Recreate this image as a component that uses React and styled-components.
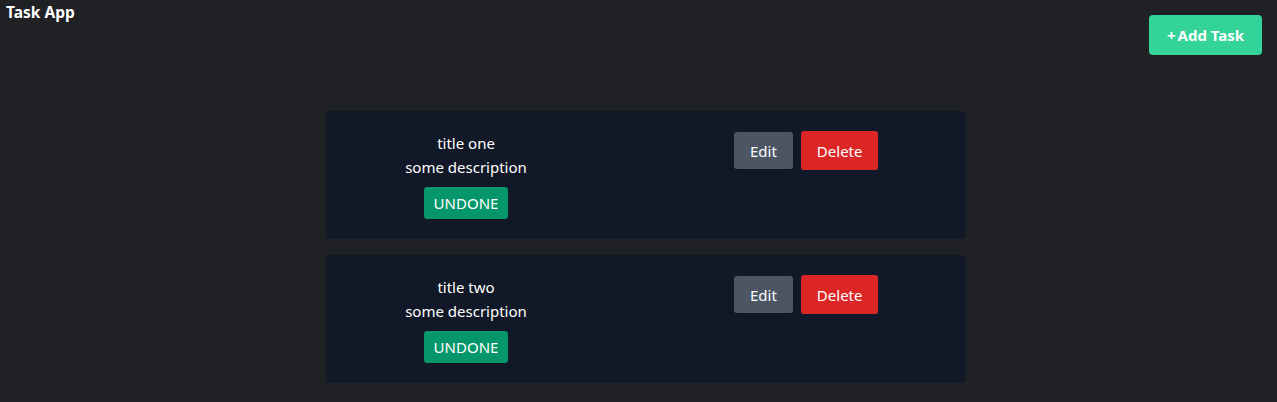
import React from 'react';
import styled, { createGlobalStyle } from 'styled-components';

const GlobalStyle = createGlobalStyle`
  body {
    margin: 0;
    background-color: #202124;
    font-family: "Noto Sans", "Open Sans", sans-serif;
    color: #ffffff;
  }
`;

const Page = styled.div`
  min-height: 100vh;
`;

const Header = styled.header`
  display: flex;
  justify-content: space-between;
  align-items: flex-start;
  padding: 0 15px 0 6px;
`;

const Title = styled.h1`
  margin: 2px 0 0;
  font-size: 15.5px;
  font-weight: 700;
  line-height: 20px;
`;

const AddButton = styled.button`
  margin-top: 15px;
  height: 40px;
  width: 113px;
  border: none;
  border-radius: 4px;
  background-color: #34d399;
  color: #ffffff;
  font-family: inherit;
  font-size: 15px;
  font-weight: 700;
  display: flex;
  align-items: center;
  justify-content: center;
  gap: 2px;
`;

const List = styled.div`
  display: flex;
  flex-direction: column;
  align-items: center;
  gap: 16px;
  padding: 56px 0 20px 15px;
`;

const Card = styled.div`
  width: 640px;
  box-sizing: border-box;
  padding: 20px 0;
  background-color: #111827;
  border-radius: 4px;
  display: grid;
  grid-template-columns: 280px 1fr;
  align-items: start;
`;

const Info = styled.div`
  display: flex;
  flex-direction: column;
  align-items: center;
  font-size: 15px;
  line-height: 24px;
`;

const Status = styled.span`
  margin-top: 8px;
  height: 32px;
  padding: 0 10px;
  display: flex;
  align-items: center;
  background-color: #059669;
  border-radius: 3px;
  font-size: 15px;
`;

const Actions = styled.div`
  display: flex;
  align-items: center;
  gap: 8px;
  padding-left: 128px;
`;

const ActionButton = styled.button`
  height: ${(p) => (p.danger ? '39px' : '37px')};
  padding: 0 16px;
  border: none;
  border-radius: 3px;
  background-color: ${(p) => (p.danger ? '#dc2626' : '#4b5563')};
  color: #ffffff;
  font-family: inherit;
  font-size: 15px;
`;

const tasks = [
  { id: 1, title: 'title one', description: 'some description', done: false },
  { id: 2, title: 'title two', description: 'some description', done: false },
];

export default function App() {
  return (
    <Page>
      <GlobalStyle />
      <Header>
        <Title>Task App</Title>
        <AddButton>
          <span>+</span>
          <span>Add Task</span>
        </AddButton>
      </Header>
      <List>
        {tasks.map((task) => (
          <Card key={task.id}>
            <Info>
              <span>{task.title}</span>
              <span>{task.description}</span>
              <Status>{task.done ? 'DONE' : 'UNDONE'}</Status>
            </Info>
            <Actions>
              <ActionButton>Edit</ActionButton>
              <ActionButton danger>Delete</ActionButton>
            </Actions>
          </Card>
        ))}
      </List>
    </Page>
  );
}
